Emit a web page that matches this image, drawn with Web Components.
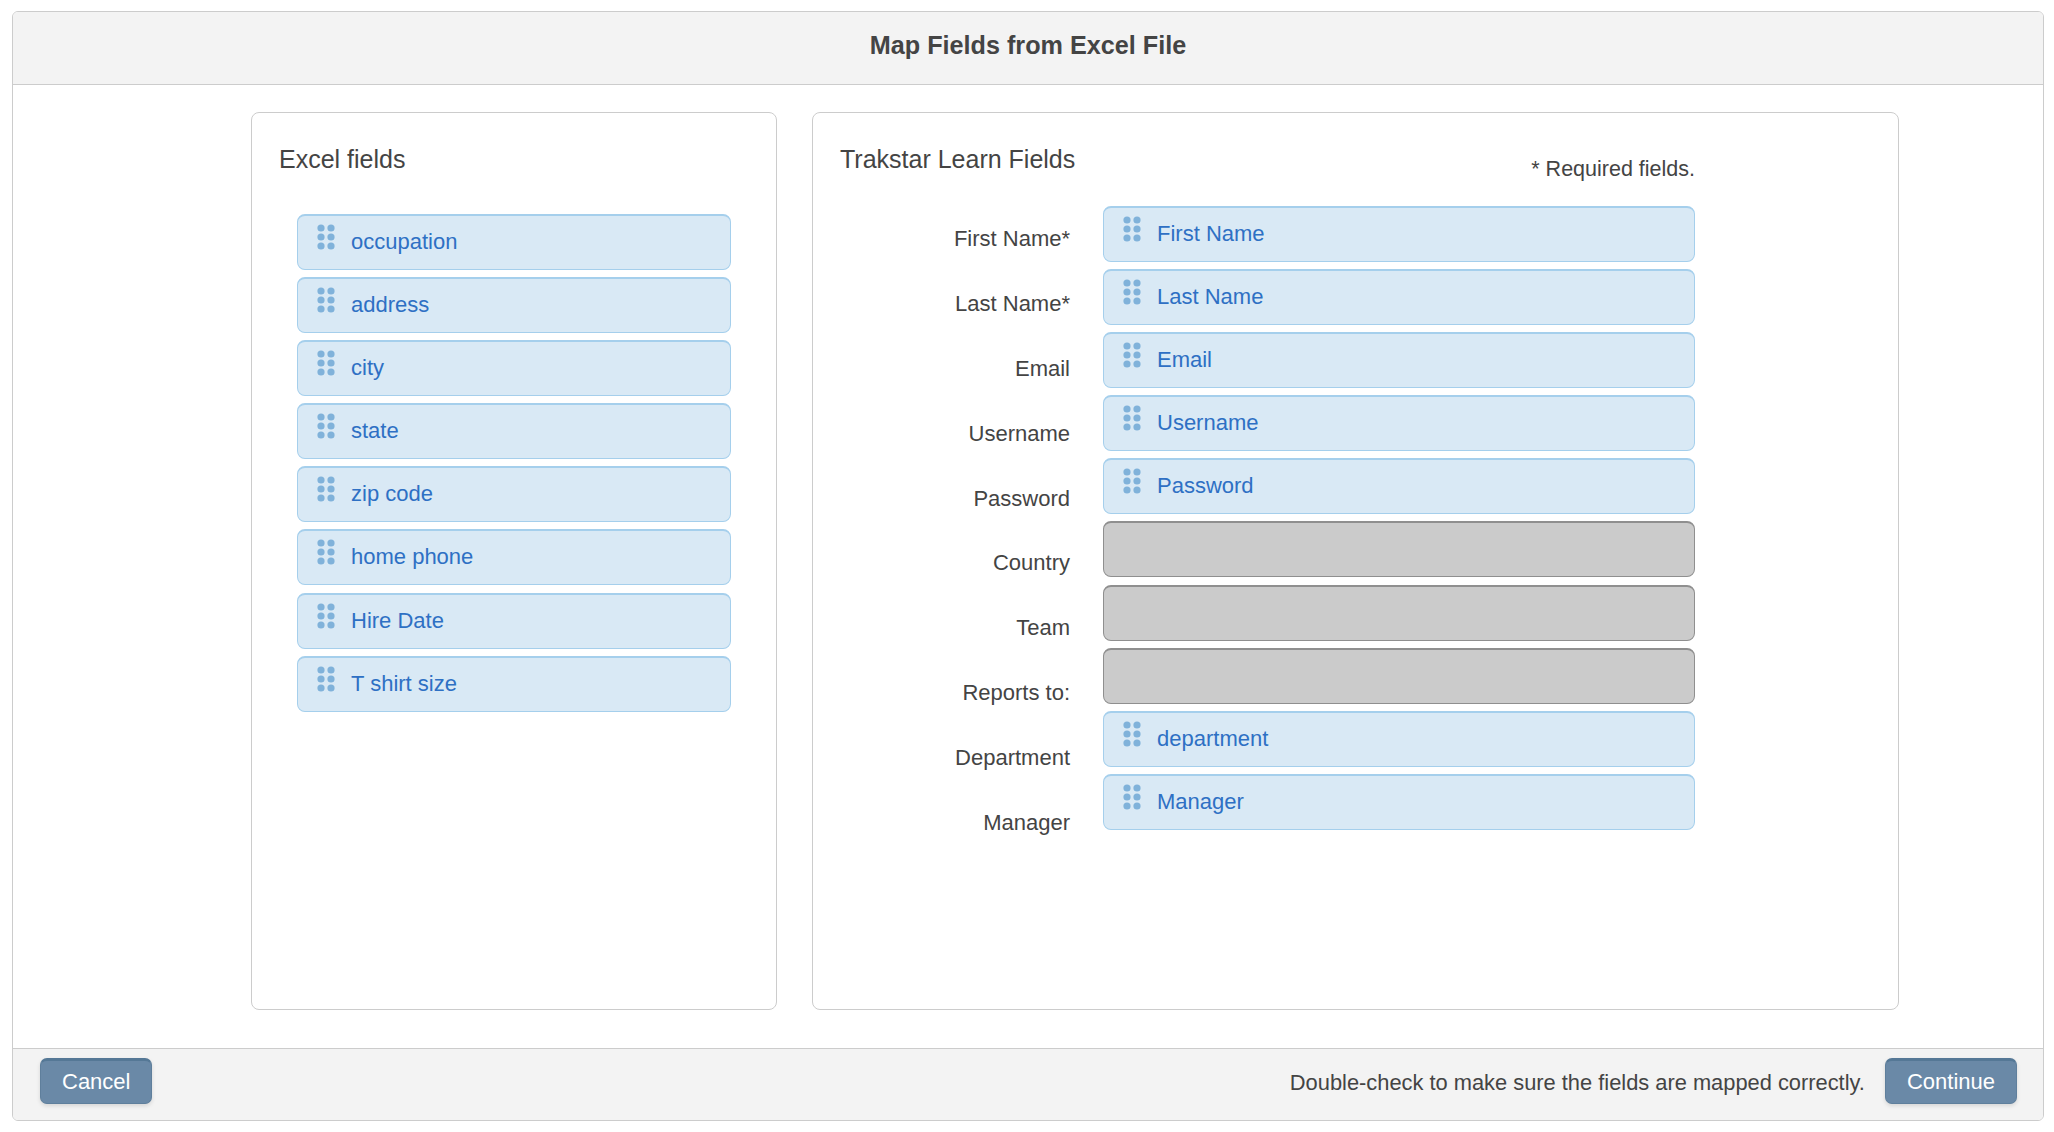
<!DOCTYPE html>
<html>
<head>
<meta charset="utf-8">
<title>Map Fields from Excel File</title>
<style>
  html, body { margin: 0; background: #fff; }
  body { font-family: "Liberation Sans", Arial, sans-serif; color: #444; }
</style>
</head>
<body>
<map-dialog>
  <span slot="title">Map Fields from Excel File</span>

  <field-panel heading="Excel fields" style="width:526px">
    <div style="padding:38px 0 0 18px;width:434px">
      <field-chip>occupation</field-chip>
      <field-chip>address</field-chip>
      <field-chip>city</field-chip>
      <field-chip>state</field-chip>
      <field-chip>zip code</field-chip>
      <field-chip>home phone</field-chip>
      <field-chip>Hire Date</field-chip>
      <field-chip>T shirt size</field-chip>
    </div>
  </field-panel>

  <field-panel heading="Trakstar Learn Fields" note="* Required fields." style="width:1087px">
    <mapping-table>
      <map-label slot="labels">First Name*</map-label>
      <map-label slot="labels">Last Name*</map-label>
      <map-label slot="labels">Email</map-label>
      <map-label slot="labels">Username</map-label>
      <map-label slot="labels">Password</map-label>
      <map-label slot="labels">Country</map-label>
      <map-label slot="labels">Team</map-label>
      <map-label slot="labels">Reports to:</map-label>
      <map-label slot="labels">Department</map-label>
      <map-label slot="labels">Manager</map-label>

      <field-chip>First Name</field-chip>
      <field-chip>Last Name</field-chip>
      <field-chip>Email</field-chip>
      <field-chip>Username</field-chip>
      <field-chip>Password</field-chip>
      <field-chip empty></field-chip>
      <field-chip empty></field-chip>
      <field-chip empty></field-chip>
      <field-chip>department</field-chip>
      <field-chip>Manager</field-chip>
    </mapping-table>
  </field-panel>

  <span slot="hint">Double-check to make sure the fields are mapped correctly.</span>
  <action-button slot="cancel">Cancel</action-button>
  <action-button slot="continue">Continue</action-button>
</map-dialog>

<script>
class MapDialog extends HTMLElement {
  constructor() {
    super();
    this.attachShadow({ mode: 'open' });
  }

  connectedCallback() {
    this.shadowRoot.innerHTML = `
      <style>
        :host {
          display: flex;
          flex-direction: column;
          box-sizing: border-box;
          width: 2032px;
          height: 1110px;
          margin: 11px 0 0 12px;
          border: 1px solid #ccc;
          border-radius: 6px;
          overflow: hidden;
        }
        header {
          height: 73px;
          box-sizing: border-box;
          padding-bottom: 5px;
          display: flex;
          align-items: center;
          justify-content: center;
          background: #f3f3f3;
          border-bottom: 1px solid #ccc;
          font-size: 25.2px;
          font-weight: bold;
          color: #444;
        }
        main {
          flex: 1;
          display: flex;
          gap: 35px;
          padding: 27px 0 38px 238px;
          min-height: 0;
        }
        footer {
          height: 72px;
          box-sizing: border-box;
          display: flex;
          align-items: center;
          padding: 0 26px 7px 27px;
          background: #f3f3f3;
          border-top: 1px solid #ccc;
          font-size: 21.85px;
          color: #444;
        }
        .hint { margin-left: auto; margin-right: 20px; padding-top: 4px; }
      </style>
      <header><slot name="title"></slot></header>
      <main><slot></slot></main>
      <footer>
        <slot name="cancel"></slot>
        <span class="hint"><slot name="hint"></slot></span>
        <slot name="continue"></slot>
      </footer>
    `;
  }
}

class FieldPanel extends HTMLElement {
  constructor() {
    super();
    this.attachShadow({ mode: 'open' });
  }

  connectedCallback() {
    const heading = this.getAttribute('heading') || '';
    const note = this.getAttribute('note');
    this.shadowRoot.innerHTML = `
      <style>
        :host {
          display: block;
          box-sizing: border-box;
          height: 898px;
          padding: 29px 27px 0;
          border: 1px solid #ccc;
          border-radius: 8px;
          background: #fff;
        }
        .top {
          display: flex;
          justify-content: space-between;
          height: 34px;
          width: 855px;
          max-width: 100%;
        }
        h2 {
          margin: 0;
          font-size: 25px;
          line-height: 34px;
          font-weight: normal;
          color: #444;
        }
        .note {
          font-size: 21.5px;
          line-height: 26px;
          color: #444;
          padding-top: 14px;
        }
      </style>
      <div class="top">
        <h2>${heading}</h2>
        ${note ? `<span class="note">${note}</span>` : ''}
      </div>
      <slot></slot>
    `;
  }
}

class MappingTable extends HTMLElement {
  constructor() {
    super();
    this.attachShadow({ mode: 'open' });
  }

  connectedCallback() {
    this.shadowRoot.innerHTML = `
      <style>
        :host {
          display: flex;
          gap: 33px;
          padding-top: 30px;
          width: 855px;
        }
        .labels { width: 230px; flex: none; padding-top: 1px; }
        .chips { flex: 1; }
      </style>
      <div class="labels"><slot name="labels"></slot></div>
      <div class="chips"><slot></slot></div>
    `;
  }
}

class MapLabel extends HTMLElement {
  constructor() {
    super();
    this.attachShadow({ mode: 'open' });
  }

  connectedCallback() {
    this.shadowRoot.innerHTML = `
      <style>
        :host {
          display: flex;
          align-items: center;
          justify-content: flex-end;
          height: 64.8px;
          font-size: 22px;
          color: #444;
        }
      </style>
      <slot></slot>
    `;
  }
}

class FieldChip extends HTMLElement {
  constructor() {
    super();
    this.attachShadow({ mode: 'open' });
  }

  connectedCallback() {
    const empty = this.hasAttribute('empty');
    this.shadowRoot.innerHTML = `
      <style>
        :host {
          display: flex;
          align-items: center;
          box-sizing: border-box;
          height: 56px;
          margin-bottom: 7.1px;
          padding-left: 18px;
          border: 1px solid #a5cfec;
          border-top-width: 2px;
          border-radius: 8px;
          background: #d9e9f5;
          color: #2e70c4;
          font-size: 22px;
        }
        :host([empty]) {
          background: #cbcbcb;
          border-color: #8f8f8f;
        }
        svg { flex: none; margin: -11px 15px 0 0; }
        span { padding-bottom: 1px; }
      </style>
      ${empty ? '' : `
        <svg width="20" height="26" viewBox="0 0 20 26" fill="#80b2da">
          <circle cx="5" cy="4" r="3.6"/><circle cx="15" cy="4" r="3.6"/>
          <circle cx="5" cy="13" r="3.6"/><circle cx="15" cy="13" r="3.6"/>
          <circle cx="5" cy="22" r="3.6"/><circle cx="15" cy="22" r="3.6"/>
        </svg>
        <span><slot></slot></span>
      `}
    `;
  }
}

class ActionButton extends HTMLElement {
  constructor() {
    super();
    this.attachShadow({ mode: 'open' });
  }

  connectedCallback() {
    this.shadowRoot.innerHTML = `
      <style>
        :host {
          display: inline-flex;
          align-items: center;
          box-sizing: border-box;
          height: 46px;
          padding: 0 21px;
          border: 1px solid #5f7f9c;
          border-top: 3px solid #557896;
          border-radius: 7px;
          background: #6a89a7;
          box-shadow: 0 2px 4px rgba(0, 0, 0, 0.12);
          color: #fff;
          font-size: 22px;
        }
      </style>
      <slot></slot>
    `;
  }
}

customElements.define('map-dialog', MapDialog);
customElements.define('field-panel', FieldPanel);
customElements.define('mapping-table', MappingTable);
customElements.define('map-label', MapLabel);
customElements.define('field-chip', FieldChip);
customElements.define('action-button', ActionButton);
</script>
</body>
</html>
